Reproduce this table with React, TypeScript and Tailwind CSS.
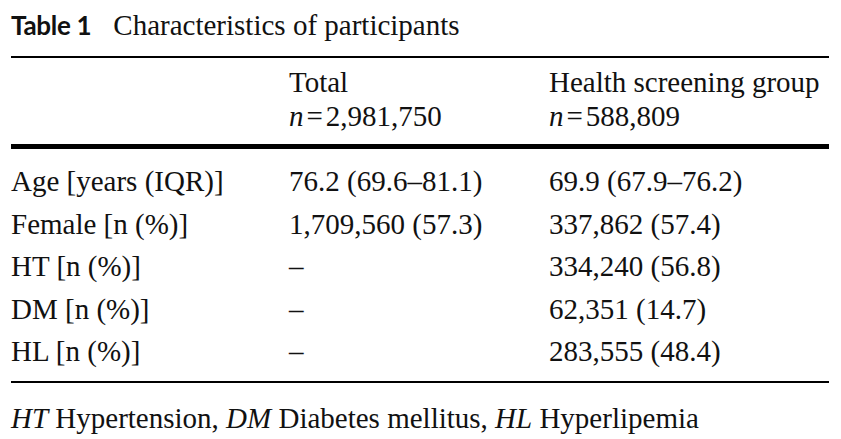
const serif = { fontFamily: '"Liberation Serif", "Times New Roman", serif' };

const rows: [string, string, string][] = [
  ['Age [years (IQR)]', '76.2 (69.6–81.1)', '69.9 (67.9–76.2)'],
  ['Female [n (%)]', '1,709,560 (57.3)', '337,862 (57.4)'],
  ['HT [n (%)]', '–', '334,240 (56.8)'],
  ['DM [n (%)]', '–', '62,351 (14.7)'],
  ['HL [n (%)]', '–', '283,555 (48.4)'],
];

export default function App() {
  return (
    <div className="w-[841px] h-[439px] bg-white text-[#111] pl-[11px] pr-[12px] overflow-hidden" style={serif}>
      {/* Caption */}
      <div className="pt-[8px] text-[29px] leading-[34px] whitespace-nowrap">
        <span className="font-bold text-[26px] tracking-[-0.3px] mr-[22px]" style={{ fontFamily: 'Lato, "Liberation Sans", sans-serif' }}>
          Table 1
        </span>
        <span>Characteristics of participants</span>
      </div>

      {/* Header */}
      <div className="mt-[14px] border-t-2 border-black grid grid-cols-[278px_260px_1fr] pt-[7px] pb-[11px] text-[29px] leading-[34px]">
        <div />
        <div className="whitespace-nowrap">
          <div>Total</div>
          <div><i>n</i><span className="mx-[3px]">=</span>2,981,750</div>
        </div>
        <div className="whitespace-nowrap">
          <div>Health screening group</div>
          <div><i>n</i><span className="mx-[3px]">=</span>588,809</div>
        </div>
      </div>

      {/* Body */}
      <div className="border-t-[5px] border-b-2 border-black pt-[11px] pb-[8px] text-[29px] leading-[42.5px]">
        {rows.map(([label, total, group]) => (
          <div key={label} className="grid grid-cols-[278px_260px_1fr] whitespace-nowrap">
            <div>{label}</div>
            <div>{total}</div>
            <div>{group}</div>
          </div>
        ))}
      </div>

      {/* Footnote */}
      <div className="mt-[18px] text-[29px] leading-[34px] whitespace-nowrap">
        <i>HT</i> Hypertension, <i>DM</i> Diabetes mellitus, <i>HL</i> Hyperlipemia
      </div>
    </div>
  );
}
